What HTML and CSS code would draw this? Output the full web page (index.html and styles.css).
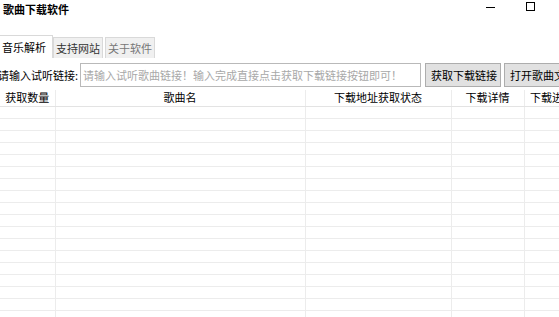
FILE: index.html
```html
<!DOCTYPE html>
<html lang="zh-CN">
<head>
    <meta charset="UTF-8">
    <meta name="viewport" content="width=device-width, initial-scale=1.0">
    <title>歌曲下载软件</title>
    <link rel="stylesheet" href="styles.css">
</head>
<body>
    <div class="titlebar">
        <span class="title">歌曲下载软件</span>
        <div class="win-ctrls">
            <span class="win-btn">
                <svg width="10" height="10" viewBox="0 0 10 10" shape-rendering="crispEdges"><rect x="0" y="5" width="9" height="1" fill="#000"/></svg>
            </span>
            <span class="win-btn">
                <svg width="10" height="10" viewBox="0 0 10 10" shape-rendering="crispEdges"><rect x="0.5" y="0.5" width="8" height="8" fill="none" stroke="#000" stroke-width="1"/></svg>
            </span>
        </div>
    </div>

    <div class="tabs">
        <div class="tab active">音乐解析</div>
        <div class="tab">支持网站</div>
        <div class="tab muted">关于软件</div>
    </div>

    <div class="panel">
        <div class="query-row">
            <label class="query-label" for="link">请输入试听链接:</label>
            <input id="link" class="query-input" type="text" placeholder="请输入试听歌曲链接！输入完成直接点击获取下载链接按钮即可！">
            <button class="btn btn-fetch">获取下载链接</button>
            <button class="btn">打开歌曲文件夹</button>
        </div>

        <table class="song-table">
            <thead>
                <tr>
                    <th class="col-count">获取数量</th>
                    <th class="col-name">歌曲名</th>
                    <th class="col-status">下载地址获取状态</th>
                    <th class="col-detail">下载详情</th>
                    <th class="col-progress">下载进度</th>
                </tr>
            </thead>
            <tbody id="rows"></tbody>
        </table>
    </div>

    <script>
        // Fill the empty grid rows
        const rows = document.getElementById('rows');
        for (let i = 0; i < 18; i++) {
            const tr = document.createElement('tr');
            for (let j = 0; j < 5; j++) {
                tr.appendChild(document.createElement('td'));
            }
            rows.appendChild(tr);
        }
    </script>
</body>
</html>
```

FILE: styles.css
```css
* {
    box-sizing: border-box;
}

body {
    margin: 0;
    width: 559px;
    height: 317px;
    overflow: hidden;
    background: #ffffff;
    color: #000000;
    font-family: "Noto Sans CJK SC", "Liberation Sans", sans-serif;
    font-size: 11px;
}

/* Title bar */
.titlebar {
    display: flex;
    justify-content: space-between;
    height: 35px;
}

.title {
    font-weight: bold;
    font-size: 11px;
    line-height: 14px;
    padding: 2px 0 0 3px;
}

.win-ctrls {
    display: flex;
    flex-shrink: 0;
    width: 80px;
    margin-right: 8px;
}

.win-btn {
    width: 40px;
    height: 14px;
    flex-shrink: 0;
    display: flex;
    align-items: center;
    justify-content: center;
}

.win-btn svg {
    display: block;
}

/* Tabs */
.tabs {
    display: flex;
    align-items: flex-end;
    height: 23px;
}

.tab {
    height: 21px;
    line-height: 20px;
    padding: 0 2px 0 2px;
    margin-right: 1px;
    border: 1px solid #d9d9d9;
    border-bottom: none;
    background: #f0f0f0;
    color: #333;
    white-space: nowrap;
}

.tab.active {
    height: 23px;
    line-height: 22px;
    background: #ffffff;
    color: #000;
    border-left: none;
    padding: 0 6px 0 2px;
    margin-right: 0;
}

.tab.muted {
    color: #777;
    margin-left: 1px;
}

/* Panel */
.panel {
    padding-top: 5px;
}

.query-row {
    display: flex;
    align-items: center;
    white-space: nowrap;
    height: 24px;
}

.query-label {
    flex-shrink: 0;
    margin-left: -2px;
    width: 82px;
    color: #000;
}

.query-input {
    flex-shrink: 0;
    width: 341px;
    height: 24px;
    border: 1px solid #b9b9b9;
    padding: 0 2px;
    font: inherit;
    outline: none;
}

.query-input::placeholder {
    color: #a8a8a8;
}

.btn {
    flex-shrink: 0;
    height: 24px;
    margin-left: 4px;
    padding: 0 5px;
    border: 1px solid #adadad;
    background: #e1e1e1;
    font: inherit;
    color: #000;
}

.btn-fetch {
    width: 76px;
    margin-right: -1px;
}

/* Table */
.song-table {
    margin-top: 3px;
    border-collapse: collapse;
    table-layout: fixed;
    width: 580px;
}

.song-table th {
    height: 16px;
    font-weight: normal;
    line-height: 15px;
    padding: 0;
    text-align: center;
    white-space: nowrap;
    overflow: hidden;
    border-right: 1px solid #ececec;
    border-bottom: 1px solid #e3e3e3;
}

.song-table tbody tr {
    height: 12px;
}

.song-table td {
    height: 12px;
    padding: 0;
    border-right: 1px solid #ececec;
    border-bottom: 1px solid #ececec;
}

.col-count { width: 55px; }
.col-name { width: 250px; }
.col-status { width: 146px; }
.col-detail { width: 73px; }
.col-progress { width: 56px; }
```
